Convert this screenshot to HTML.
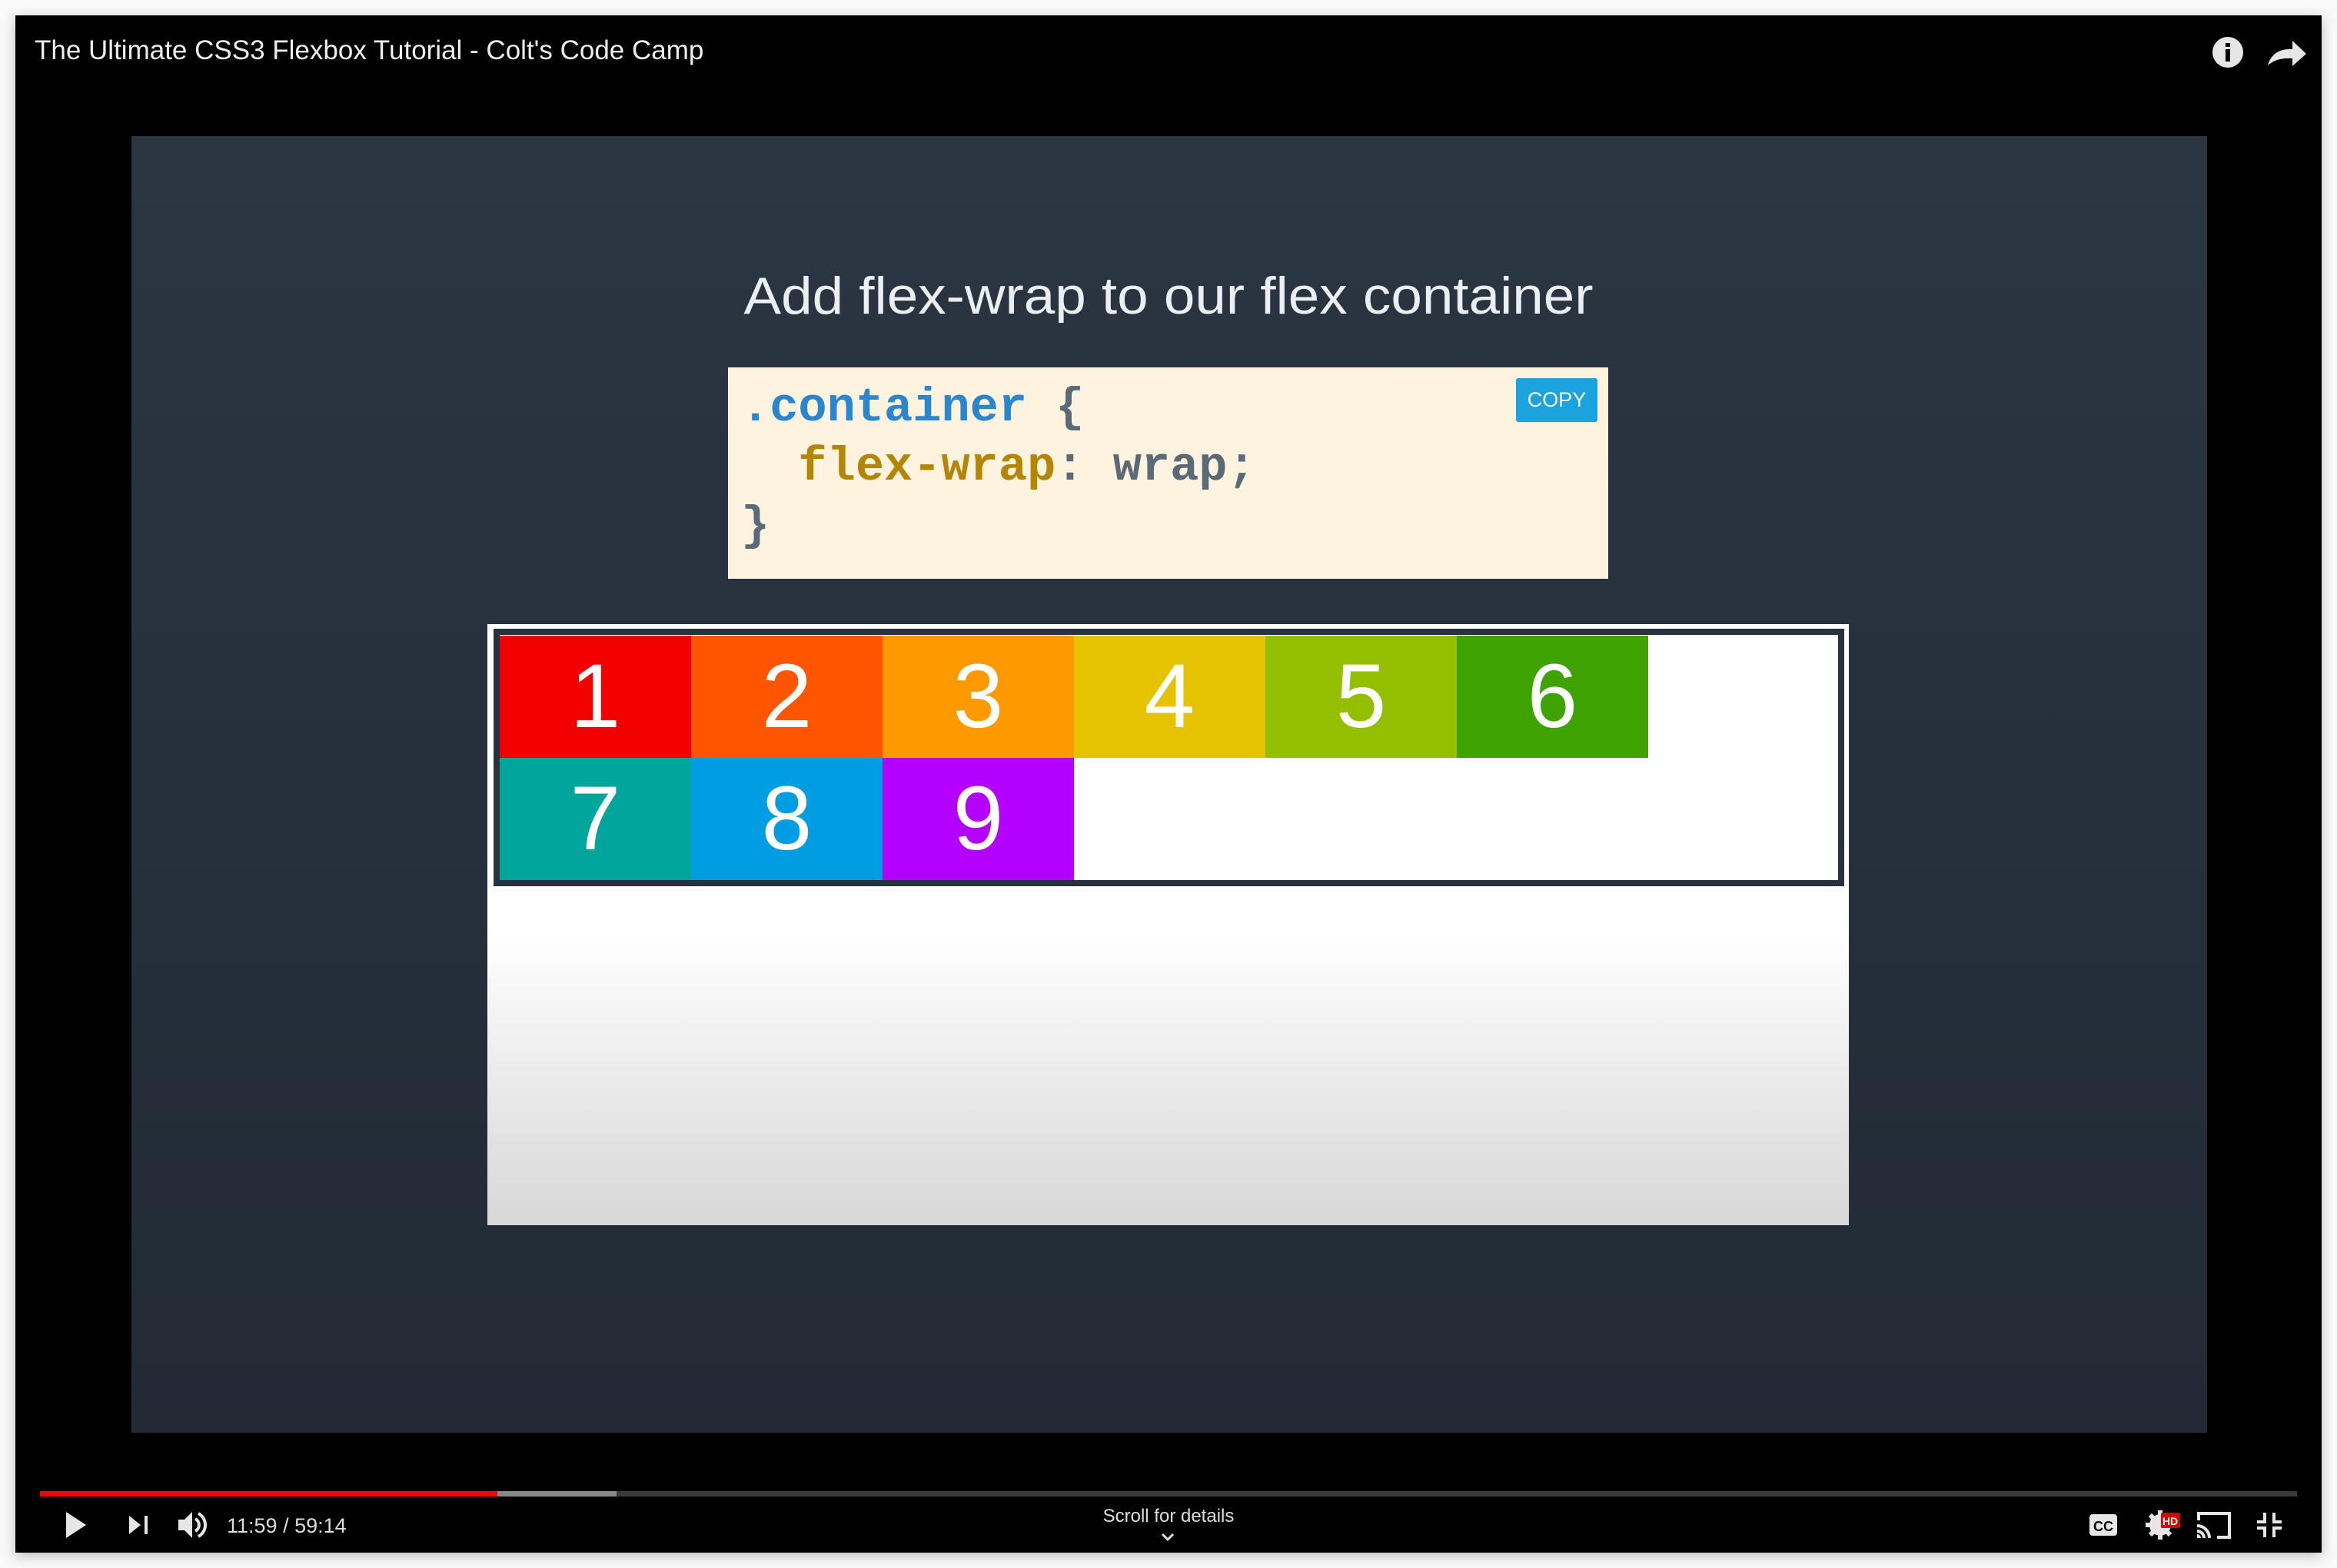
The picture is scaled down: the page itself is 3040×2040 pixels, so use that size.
<!DOCTYPE html>
<html><head><meta charset="utf-8"><style>
html,body{margin:0;padding:0;width:3040px;height:2040px;background:#f9f9f9;overflow:hidden;font-family:"Liberation Sans",sans-serif}
.abs{position:absolute}
#player{left:20px;top:20px;width:3000px;height:2000px;background:#000;box-shadow:0 4px 16px rgba(0,0,0,.25)}
#slide{left:171px;top:177px;width:2700px;height:1687px;background:linear-gradient(#2b3643,#212a35)}
.box{position:absolute;width:249px;height:159px;color:#fff;font-size:118px;text-align:center;line-height:159px;font-family:"Liberation Sans",sans-serif}
</style></head><body>
<div class="abs" id="player"></div>
<div class="abs" style="left:45px;top:44px;font-size:35px;color:#eee;line-height:44px">The Ultimate CSS3 Flexbox Tutorial - Colt's Code Camp</div>
<svg class="abs" style="left:2870px;top:40px" width="140" height="56" viewBox="0 0 140 56">
<circle cx="28" cy="28" r="20" fill="#e6e6e6"/>
<rect x="25" y="16" width="6" height="5" fill="#000"/><rect x="25" y="24" width="6" height="16" fill="#000"/>
<path d="M80 45 C84 30 96 23 112 24 L112 13 L130 30 L112 46 L112 36 C98 35 88 38 80 45 Z" fill="#e6e6e6"/>
</svg>
<div class="abs" id="slide"></div>
<svg class="abs" style="left:0;top:320px" width="3040" height="100"><text x="1520" y="88" text-anchor="middle" font-family="Liberation Sans, sans-serif" font-size="68" fill="#eceff1" textLength="1105" lengthAdjust="spacingAndGlyphs">Add flex-wrap to our flex container</text></svg>
<div class="abs" style="left:947px;top:478px;width:1145px;height:275px;background:#fdf3de"></div>
<div class="abs" style="left:1972px;top:492px;width:106px;height:57px;background:#1aa3dc;border-radius:3px;color:#fff;font-size:27px;line-height:57px;text-align:center">COPY</div>
<div class="abs" style="left:964px;top:492px;font-family:'Liberation Mono',monospace;font-weight:bold;font-size:62px;line-height:77px;white-space:pre;color:#5a6a76"><span style="color:#2a86cf">.container</span> {
  <span style="color:#b58605">flex-wrap</span>: wrap;
}</div>
<div class="abs" style="left:634px;top:812px;width:1771px;height:782px;background:linear-gradient(#fff 0,#fff 400px,#d7d7d7 782px)"></div>
<div class="abs" style="left:642px;top:818px;width:1741px;height:319px;border:8px solid #28323e;background:#fff"></div>
<div class="box" style="left:650px;top:827px;background:#f20000">1</div>
<div class="box" style="left:899px;top:827px;background:#ff5500">2</div>
<div class="box" style="left:1148px;top:827px;background:#ff9900">3</div>
<div class="box" style="left:1397px;top:827px;background:#e5c300">4</div>
<div class="box" style="left:1646px;top:827px;background:#93bf00">5</div>
<div class="box" style="left:1895px;top:827px;background:#3ea300">6</div>
<div class="box" style="left:650px;top:986px;background:#00a59c">7</div>
<div class="box" style="left:899px;top:986px;background:#009de2">8</div>
<div class="box" style="left:1148px;top:986px;background:#b300ff">9</div>
<div class="abs" style="left:52px;top:1940px;width:2936px;height:7px;background:#3a3a3a"></div>
<div class="abs" style="left:52px;top:1940px;width:750px;height:7px;background:#888"></div>
<div class="abs" style="left:52px;top:1940px;width:595px;height:7px;background:#f00"></div>
<svg class="abs" style="left:0;top:1960px" width="3040" height="60" viewBox="0 1960 3040 60">
<path d="M86 1967 L112 1984 L86 2001 Z" fill="#e6e6e6"/>
<path d="M168 1972 L183 1984 L168 1996 Z" fill="#e6e6e6"/><rect x="188" y="1972" width="4" height="24" fill="#e6e6e6"/>
<path d="M232 1977 L240 1977 L250 1967 L250 2001 L240 1991 L232 1991 Z" fill="#e6e6e6"/>
<path d="M254 1976 A9 9 0 0 1 254 1992" stroke="#e6e6e6" stroke-width="4" fill="none"/>
<path d="M258 1969 A17 17 0 0 1 258 1999" stroke="#e6e6e6" stroke-width="4" fill="none"/>
<text x="295" y="1994" font-family="Liberation Sans, sans-serif" font-size="27" fill="#ddd">11:59 / 59:14</text>
<text x="1520" y="1980" text-anchor="middle" font-family="Liberation Sans, sans-serif" font-size="24" fill="#ddd">Scroll for details</text>
<path d="M1512 1996 L1519 2003 L1526 1996" stroke="#ddd" stroke-width="3" fill="none"/>
<rect x="2718" y="1970" width="36" height="28" rx="4" fill="#e6e6e6"/>
<text x="2736" y="1992" text-anchor="middle" font-family="Liberation Sans, sans-serif" font-weight="bold" font-size="18" fill="#000">CC</text>
<circle cx="2810" cy="1984" r="14" fill="#e6e6e6"/><circle cx="2810" cy="1984" r="5" fill="#000"/>
<g stroke="#e6e6e6" stroke-width="6"><path d="M2810 1965 V2003 M2791 1984 H2829 M2797 1971 L2823 1997 M2823 1971 L2797 1997"/></g>
<rect x="2811" y="1968" width="25" height="20" rx="2" fill="#d00"/>
<text x="2823" y="1984" text-anchor="middle" font-family="Liberation Sans, sans-serif" font-weight="bold" font-size="14" fill="#fff">HD</text>
<path d="M2860 1978 V1969 H2900 V2000 H2884" stroke="#e6e6e6" stroke-width="4" fill="none"/>
<path d="M2858 1985 A16 16 0 0 1 2874 2001 M2858 1992 A9 9 0 0 1 2867 2001" stroke="#e6e6e6" stroke-width="4" fill="none"/>
<path d="M2858 1996 A5 5 0 0 1 2863 2001 L2858 2001 Z" fill="#e6e6e6"/>
<path d="M2936 1980 H2946 V1968 M2968 1980 H2958 V1968 M2936 1988 H2946 V2000 M2968 1988 H2958 V2000" stroke="#e6e6e6" stroke-width="4" fill="none"/>
</svg>
</body></html>
